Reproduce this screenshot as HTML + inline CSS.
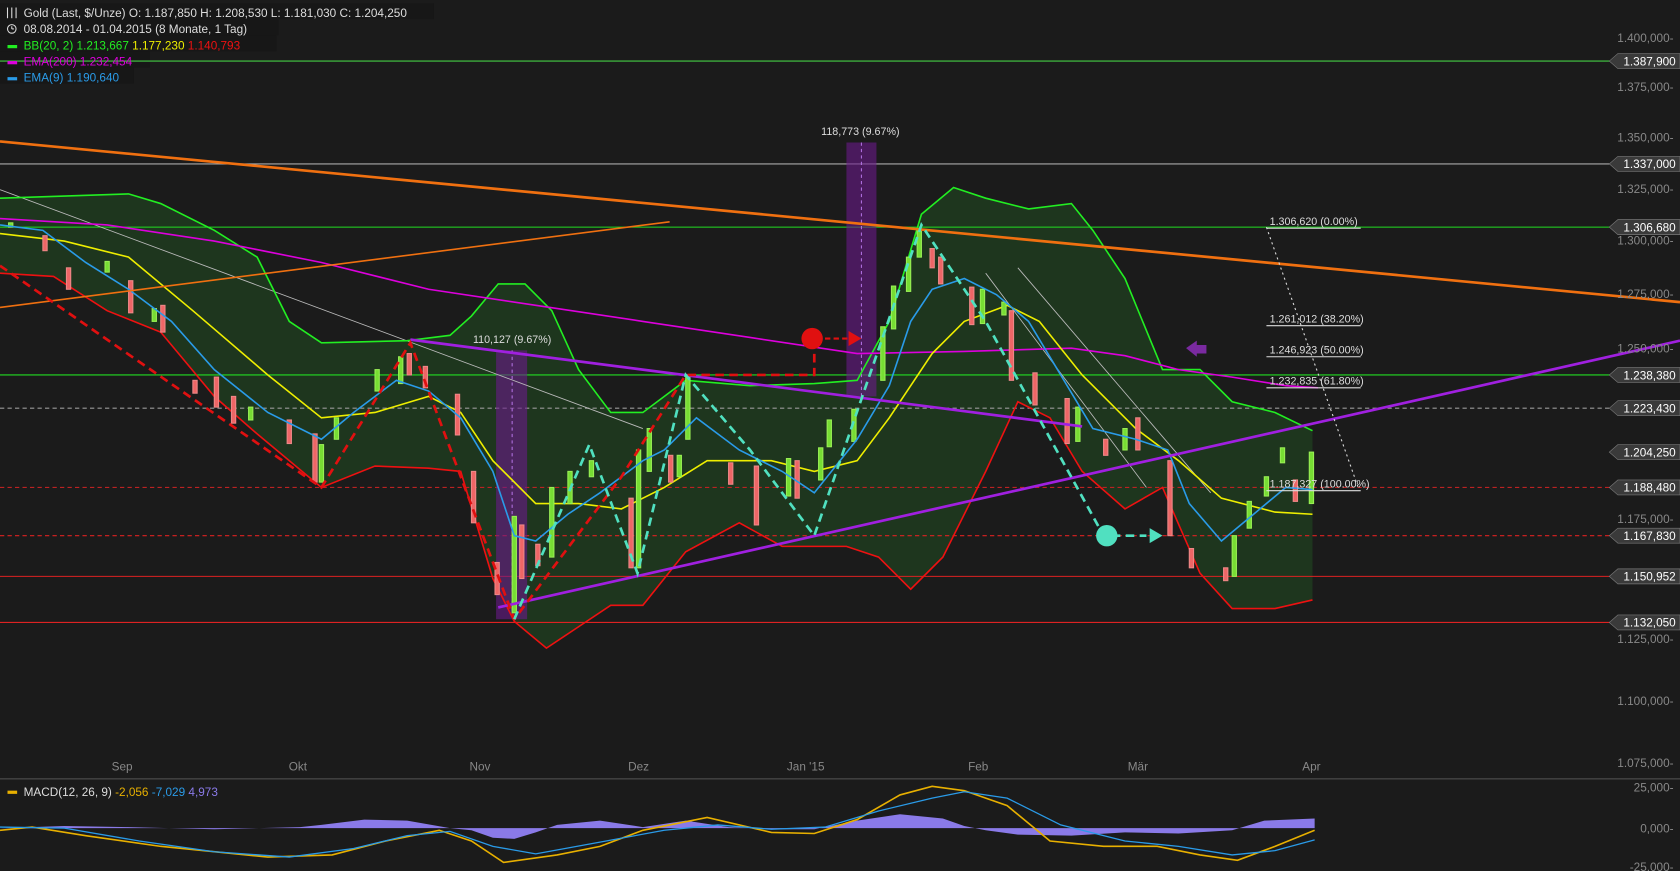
<!DOCTYPE html>
<html><head><meta charset="utf-8"><style>
html,body{margin:0;padding:0;background:#1b1b1b;overflow:hidden}
svg{display:block}
text{font-family:"Liberation Sans",sans-serif}
</style></head><body>
<svg width="1680" height="871" viewBox="0 0 1568 813" preserveAspectRatio="none" xmlns="http://www.w3.org/2000/svg">
<rect width="1568" height="813" fill="#1b1b1b"/>
<polygon fill="#1e361e" points="0,185 60,183 120,181 150,190 200,215 240,240 270,300 300,320 380,318 420,313 440,295 465,265 490,265 515,290 540,345 570,385 600,385 640,355 700,360 760,358 800,355 830,300 860,200 890,175 920,185 960,195 1000,190 1020,215 1050,260 1085,345 1120,345 1150,375 1190,385 1225,402 1225,560 1190,568 1150,568 1120,535 1085,455 1050,475 1010,440 980,390 950,375 920,440 880,520 850,550 820,520 790,510 730,510 690,488 640,515 600,565 570,565 540,585 510,605 480,580 460,540 430,440 400,437 350,435 300,455 240,405 200,370 150,310 100,290 50,258 0,255"/>
<rect x="0" y="3" width="405" height="15" fill="#171717"/>
<rect x="0" y="18" width="260" height="15" fill="#171717"/>
<rect x="0" y="33" width="258" height="15" fill="#171717"/>
<rect x="0" y="48" width="140" height="15" fill="#171717"/>
<rect x="0" y="63" width="125" height="15" fill="#171717"/>
<g stroke-width="1">
<line x1="0" y1="57" x2="1505" y2="57" stroke="#4c4"/>
<line x1="0" y1="153" x2="1505" y2="153" stroke="#aaa"/>
<line x1="0" y1="212" x2="1505" y2="212" stroke="#2d2"/>
<line x1="0" y1="350" x2="1505" y2="350" stroke="#2d2"/>
<line x1="0" y1="381" x2="1505" y2="381" stroke="#999" stroke-dasharray="4,3"/>
<line x1="0" y1="455" x2="1505" y2="455" stroke="#b22" stroke-dasharray="4,3"/>
<line x1="0" y1="500" x2="1505" y2="500" stroke="#d22" stroke-dasharray="4,3"/>
<line x1="0" y1="538" x2="1505" y2="538" stroke="#d22"/>
<line x1="0" y1="581" x2="1505" y2="581" stroke="#d22"/>
</g>
<rect x="463" y="327" width="29" height="251" fill="#6a1a8a" opacity="0.6"/>
<rect x="790" y="133" width="28" height="237" fill="#6a1a8a" opacity="0.6"/>
<line x1="478" y1="327" x2="478" y2="578" stroke="#b070e0" stroke-dasharray="3,3"/>
<line x1="804" y1="133" x2="804" y2="370" stroke="#b070e0" stroke-dasharray="3,3"/>
<text x="478" y="320" fill="#ddd" font-size="10" text-anchor="middle">110,127 (9.67%)</text>
<text x="803" y="126" fill="#ddd" font-size="10" text-anchor="middle">118,773 (9.67%)</text>
<g stroke="#bbb" stroke-width="0.8" fill="none">
<line x1="0" y1="177" x2="600" y2="400"/>
<line x1="920" y1="255" x2="1070" y2="455"/>
<line x1="950" y1="250" x2="1130" y2="460"/>
</g>
<polyline fill="none" stroke="#2e2" stroke-width="1.5" points="0,185 60,183 120,181 150,190 200,215 240,240 270,300 300,320 380,318 420,313 440,295 465,265 490,265 515,290 540,345 570,385 600,385 640,355 700,360 760,358 800,355 830,300 860,200 890,175 920,185 960,195 1000,190 1020,215 1050,260 1085,345 1120,345 1150,375 1190,385 1225,402"/>
<polyline fill="none" stroke="#e11" stroke-width="1.5" points="0,255 50,258 100,290 150,310 200,370 240,405 300,455 350,435 400,437 430,440 460,540 480,580 510,605 540,585 570,565 600,565 640,515 690,488 730,510 790,510 820,520 850,550 880,520 920,440 950,375 980,390 1010,440 1050,475 1085,455 1120,535 1150,568 1190,568 1225,560"/>
<polyline fill="none" stroke="#d0d" stroke-width="1.5" points="0,204 100,210 200,225 300,245 400,270 500,285 600,300 700,315 800,330 900,328 1000,325 1050,332 1100,345 1150,352 1200,360 1230,362"/>
<polyline fill="none" stroke="#ee0" stroke-width="1.5" points="0,218 60,225 120,240 180,290 250,350 300,390 350,385 400,370 430,385 460,430 500,470 540,470 580,475 620,455 660,430 720,430 760,440 800,430 830,390 870,330 900,300 940,285 970,300 1010,350 1060,400 1100,430 1140,465 1190,478 1225,480"/>
<g stroke-width="1">
<g fill="#e66" stroke="#e88">
<rect x="40" y="220" width="4" height="14"/><rect x="62" y="250" width="4" height="20"/><rect x="120" y="262" width="4" height="30"/><rect x="150" y="285" width="4" height="25"/><rect x="180" y="355" width="4" height="12"/><rect x="200" y="352" width="4" height="28"/><rect x="216" y="370" width="4" height="25"/><rect x="268" y="392" width="4" height="22"/><rect x="292" y="405" width="4" height="45"/><rect x="380" y="330" width="4" height="20"/><rect x="395" y="342" width="4" height="20"/><rect x="425" y="368" width="4" height="38"/><rect x="440" y="440" width="4" height="48"/><rect x="462" y="525" width="4" height="30"/><rect x="485" y="490" width="4" height="50"/><rect x="500" y="508" width="4" height="20"/><rect x="587" y="465" width="4" height="65"/><rect x="624" y="425" width="4" height="25"/><rect x="680" y="432" width="4" height="20"/><rect x="704" y="435" width="4" height="55"/><rect x="742" y="430" width="4" height="35"/><rect x="868" y="232" width="4" height="18"/><rect x="876" y="240" width="4" height="25"/><rect x="905" y="268" width="4" height="35"/><rect x="942" y="290" width="4" height="65"/><rect x="964" y="348" width="4" height="30"/><rect x="994" y="372" width="4" height="42"/><rect x="1030" y="410" width="4" height="15"/><rect x="1060" y="390" width="4" height="30"/><rect x="1090" y="430" width="4" height="70"/><rect x="1110" y="512" width="4" height="18"/><rect x="1142" y="530" width="4" height="12"/><rect x="1207" y="448" width="4" height="20"/>
</g>
<g fill="#7d3" stroke="#9e5">
<rect x="8" y="208" width="4" height="4"/><rect x="98" y="244" width="4" height="10"/><rect x="142" y="288" width="4" height="12"/><rect x="232" y="380" width="4" height="12"/><rect x="298" y="415" width="4" height="35"/><rect x="312" y="390" width="4" height="20"/><rect x="350" y="345" width="4" height="20"/><rect x="372" y="333" width="4" height="25"/><rect x="478" y="482" width="4" height="90"/><rect x="513" y="455" width="4" height="65"/><rect x="530" y="440" width="4" height="30"/><rect x="550" y="430" width="4" height="15"/><rect x="594" y="420" width="4" height="110"/><rect x="604" y="400" width="4" height="40"/><rect x="632" y="425" width="4" height="20"/><rect x="640" y="350" width="4" height="60"/><rect x="734" y="428" width="4" height="35"/><rect x="764" y="418" width="4" height="30"/><rect x="772" y="392" width="4" height="25"/><rect x="795" y="382" width="4" height="30"/><rect x="822" y="305" width="4" height="50"/><rect x="832" y="267" width="4" height="40"/><rect x="846" y="240" width="4" height="32"/><rect x="856" y="215" width="4" height="25"/><rect x="915" y="270" width="4" height="32"/><rect x="935" y="282" width="4" height="12"/><rect x="1004" y="380" width="4" height="32"/><rect x="1048" y="400" width="4" height="20"/><rect x="1150" y="500" width="4" height="38"/><rect x="1164" y="468" width="4" height="25"/><rect x="1180" y="445" width="4" height="18"/><rect x="1195" y="418" width="4" height="14"/><rect x="1222" y="422" width="4" height="48"/>
</g>
</g>
<polyline fill="none" stroke="#2a9be8" stroke-width="1.5" points="0,210 40,215 80,245 120,270 160,300 200,345 250,385 300,410 330,385 370,355 400,365 430,390 460,440 480,500 500,505 530,480 560,460 600,430 620,420 650,390 690,420 730,440 760,460 800,410 830,360 850,300 870,270 900,260 930,275 960,300 990,350 1020,400 1060,410 1090,420 1110,470 1140,505 1170,480 1200,455 1225,457"/>
<line x1="0" y1="132" x2="1568" y2="282" stroke="#f07010" stroke-width="2.5"/>
<line x1="0" y1="287" x2="625" y2="207" stroke="#f07010" stroke-width="1.5"/>
<polyline fill="none" stroke="#a020e0" stroke-width="2.5" points="383,317 1010,398"/>
<line x1="465" y1="567" x2="1568" y2="318" stroke="#a020e0" stroke-width="2.5"/>
<polyline fill="none" stroke="#e01010" stroke-width="2.5" stroke-dasharray="8,5" points="0,248 300,455 383,320 400,365 480,578 580,445 640,350 760,350 760,330"/>
<polyline fill="none" stroke="#50e0c0" stroke-width="2.5" stroke-dasharray="8,5" points="480,578 550,415 595,535 640,350 700,420 760,500 860,210 920,300 1030,500 1070,500"/>
<circle cx="758" cy="316" r="10" fill="#e01010"/>
<line x1="770" y1="316" x2="795" y2="316" stroke="#e01010" stroke-width="2" stroke-dasharray="5,3"/>
<polygon points="792,309 804,316 792,323" fill="#e01010"/>
<circle cx="1033" cy="500" r="10" fill="#50e0c0"/>
<polygon points="1073,493 1085,500 1073,507" fill="#50e0c0"/>
<polygon points="1107,325 1117,318 1117,322 1126,322 1126,330 1117,330 1117,333" fill="#7a2aa0"/>
<line x1="1182" y1="212" x2="1268" y2="456" stroke="#ddd" stroke-dasharray="2,3"/>
<g fill="#ddd" font-size="10">
<text x="1185" y="210">1.306,620 (0.00%)</text>
<text x="1185" y="301">1.261,012 (38.20%)</text>
<text x="1185" y="330">1.246,923 (50.00%)</text>
<text x="1185" y="359">1.232,835 (61.80%)</text>
<text x="1185" y="455">1.187,327 (100.00%)</text>
</g>
<g stroke="#ddd"><line x1="1182" y1="213" x2="1270" y2="213"/><line x1="1182" y1="304" x2="1270" y2="304"/><line x1="1182" y1="333" x2="1270" y2="333"/><line x1="1182" y1="362" x2="1270" y2="362"/><line x1="1182" y1="458" x2="1270" y2="458"/></g>
<g fill="#888" font-size="11" text-anchor="end">
<text x="1562" y="39">1.400,000-</text><text x="1562" y="85">1.375,000-</text><text x="1562" y="132">1.350,000-</text><text x="1562" y="180">1.325,000-</text><text x="1562" y="228">1.300,000-</text><text x="1562" y="278">1.275,000-</text><text x="1562" y="329">1.250,000-</text><text x="1562" y="488">1.175,000-</text><text x="1562" y="600">1.125,000-</text><text x="1562" y="658">1.100,000-</text><text x="1562" y="716">1.075,000-</text>
<text x="1562" y="739">25,000-</text><text x="1562" y="777">0,000-</text><text x="1562" y="813">-25,000-</text>
</g>
<g font-size="11" text-anchor="end">
<g fill="#3a3a3a" stroke="#777" stroke-width="0.6">
<path d="M1502,57 l8,-7 h58 v14 h-58z"/><path d="M1502,153 l8,-7 h58 v14 h-58z"/><path d="M1502,212 l8,-7 h58 v14 h-58z"/><path d="M1502,350 l8,-7 h58 v14 h-58z"/><path d="M1502,381 l8,-7 h58 v14 h-58z"/><path d="M1502,422 l8,-7 h58 v14 h-58z"/><path d="M1502,455 l8,-7 h58 v14 h-58z"/><path d="M1502,500 l8,-7 h58 v14 h-58z"/><path d="M1502,538 l8,-7 h58 v14 h-58z"/><path d="M1502,581 l8,-7 h58 v14 h-58z"/>
</g>
<g fill="#fff">
<text x="1564" y="61">1.387,900</text><text x="1564" y="157">1.337,000</text><text x="1564" y="216">1.306,680</text><text x="1564" y="354">1.238,380</text><text x="1564" y="385">1.223,430</text><text x="1564" y="426">1.204,250</text><text x="1564" y="459">1.188,480</text><text x="1564" y="504">1.167,830</text><text x="1564" y="542">1.150,952</text><text x="1564" y="585">1.132,050</text>
</g></g>
<g fill="#888" font-size="11" text-anchor="middle">
<text x="114" y="719">Sep</text><text x="278" y="719">Okt</text><text x="448" y="719">Nov</text><text x="596" y="719">Dez</text><text x="752" y="719">Jan '15</text><text x="913" y="719">Feb</text><text x="1062" y="719">Mär</text><text x="1224" y="719">Apr</text>
</g>
<line x1="0" y1="727" x2="1568" y2="727" stroke="#555"/>
<path fill="#8a7ae8" d="M0,773 L60,771 L120,772 L200,774 L280,772 L300,770 L340,765 L380,766 L420,773 L440,775 L460,782 L480,783 L500,777 L520,770 L560,766 L600,772 L640,766 L680,772 L720,774 L760,774 L800,766 L840,760 L880,764 L900,771 L920,775 L950,779 L1000,780 L1050,777 L1100,778 L1150,775 L1180,766 L1227,764 L1227,773 L0,773Z"/>
<polyline fill="none" stroke="#e8b000" stroke-width="1.5" points="0,775 30,772 80,780 150,790 250,800 310,798 360,785 410,775 440,785 470,805 520,798 560,790 600,775 660,763 720,777 760,778 800,765 840,742 870,734 900,738 940,752 980,785 1030,790 1080,790 1120,798 1155,803 1190,790 1227,775"/>
<polyline fill="none" stroke="#2a9be8" stroke-width="1.2" points="0,772 60,773 130,785 200,795 270,800 330,792 380,780 420,776 460,790 500,797 560,786 620,775 670,770 720,774 770,772 820,757 870,745 900,739 940,745 990,770 1050,785 1100,790 1150,798 1190,794 1227,784"/>
<g font-size="11" fill="#ddd">
<text x="22" y="16">Gold (Last, $/Unze)  O: 1.187,850  H: 1.208,530  L: 1.181,030  C: 1.204,250</text>
<text x="22" y="31">08.08.2014 - 01.04.2015 (8 Monate, 1 Tag)</text>
<text x="22" y="46"><tspan fill="#2e2">BB(20, 2)  1.213,667</tspan> <tspan fill="#ee0">1.177,230</tspan> <tspan fill="#e11">1.140,793</tspan></text>
<text x="22" y="61" fill="#d0d">EMA(200)  1.232,454</text>
<text x="22" y="76" fill="#2a9be8">EMA(9)  1.190,640</text>
<text x="22" y="743" fill="#ddd">MACD(12, 26, 9)  <tspan fill="#e8b000">-2,056</tspan>  <tspan fill="#2a9be8">-7,029</tspan>  <tspan fill="#8a7ae8">4,973</tspan></text>
</g>
<rect x="7" y="42" width="9" height="3" fill="#2e2"/><rect x="7" y="57" width="9" height="3" fill="#d0d"/><rect x="7" y="72" width="9" height="3" fill="#2a9be8"/><rect x="7" y="738" width="9" height="3" fill="#e8b000"/>
<circle cx="11" cy="27" r="4" fill="none" stroke="#ddd"/>
<line x1="11" y1="27" x2="11" y2="24.5" stroke="#ddd"/><line x1="11" y1="27" x2="13" y2="27" stroke="#ddd"/>
<g stroke="#ddd"><line x1="7" y1="7" x2="7" y2="17"/><line x1="11" y1="7" x2="11" y2="17"/><line x1="15" y1="7" x2="15" y2="17"/></g>
</svg>
</body></html>
